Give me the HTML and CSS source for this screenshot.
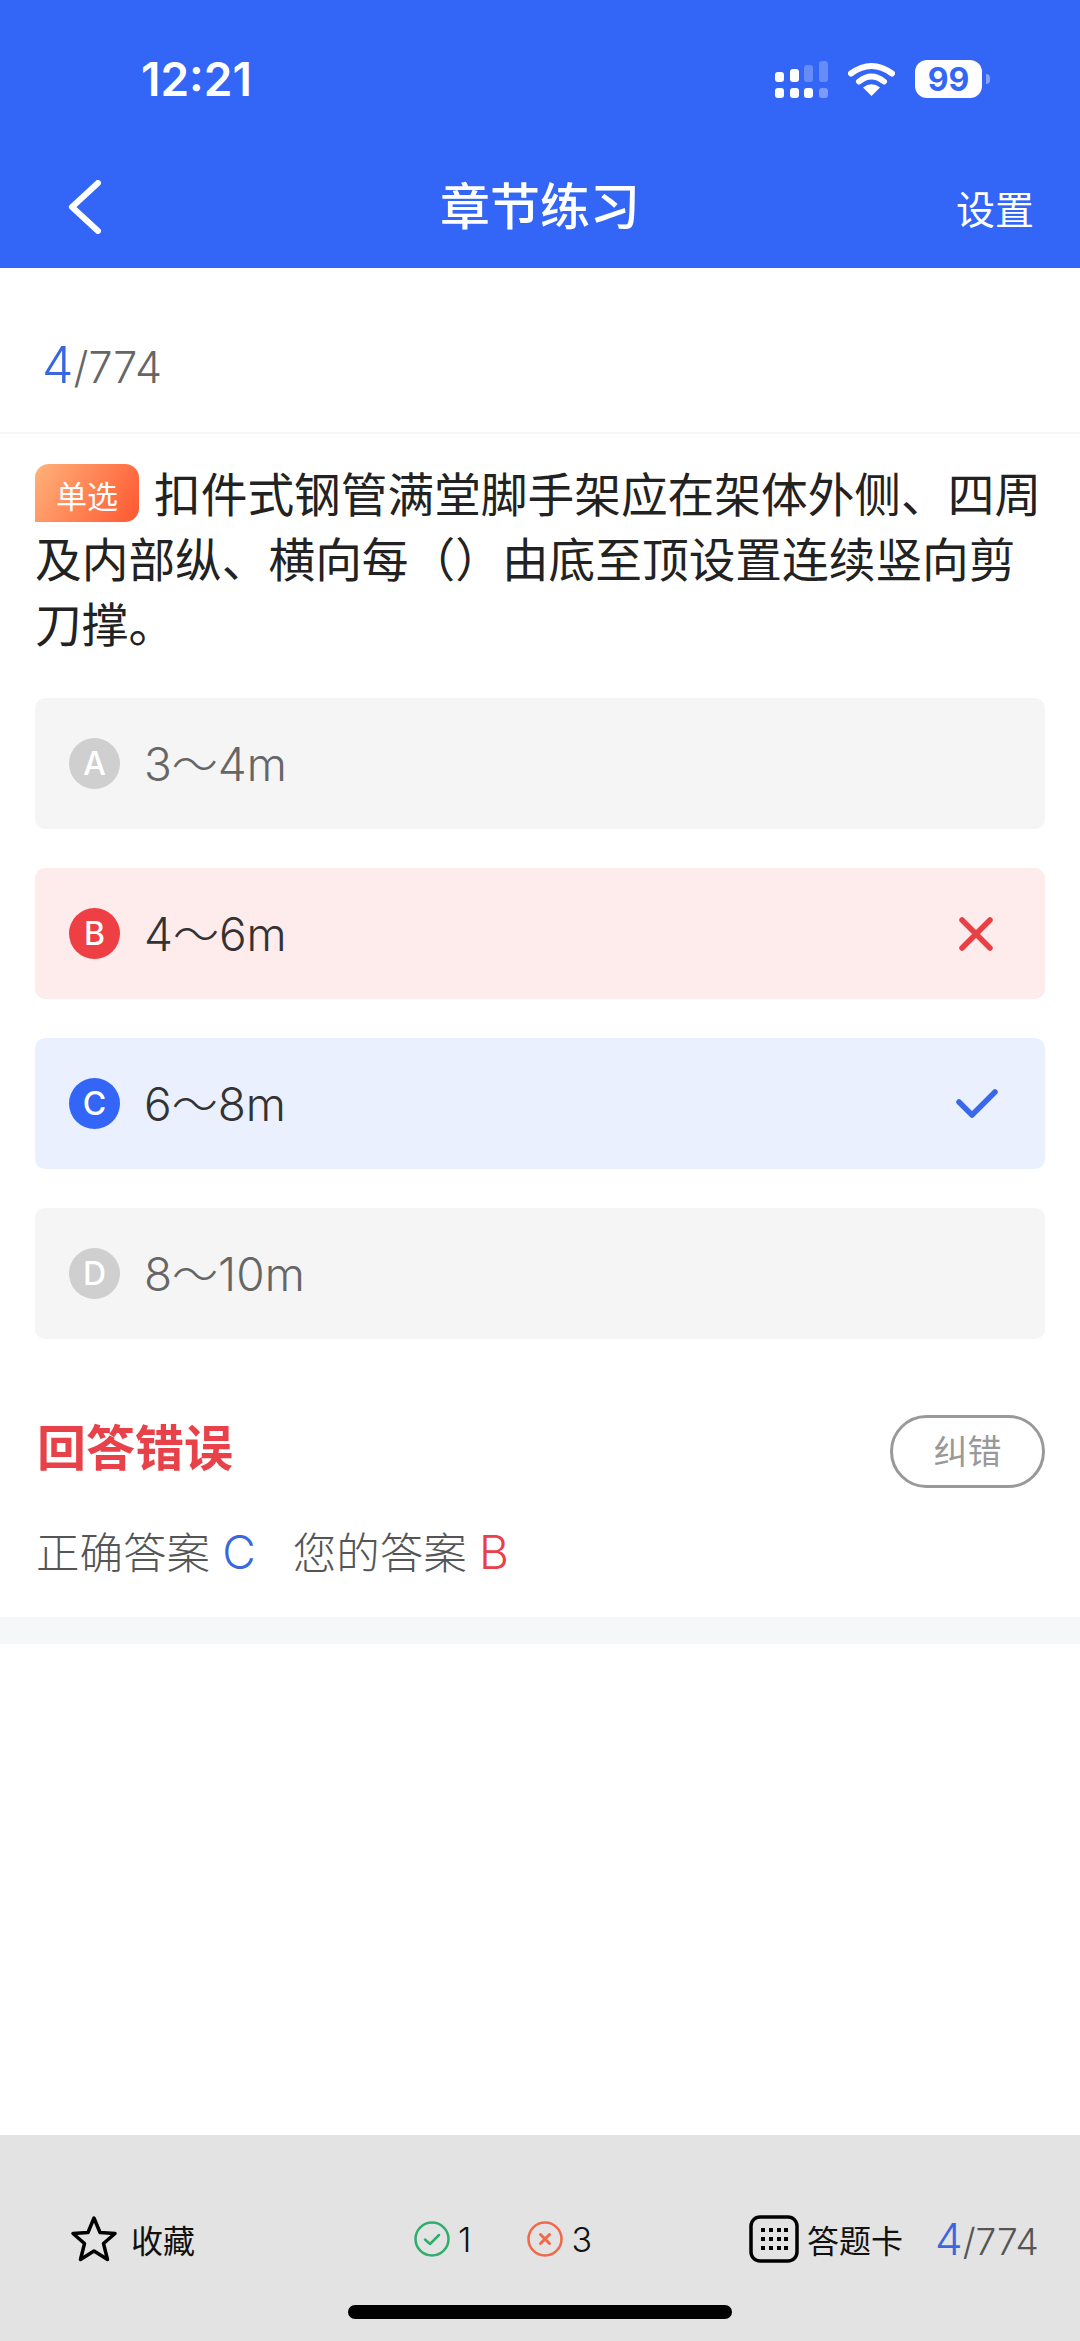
FILE: index.html
```html
<!DOCTYPE html>
<html lang="zh-CN">
<head>
    <meta charset="UTF-8">
    <meta name="viewport" content="width=device-width, initial-scale=1.0">
    <title>章节练习</title>
    <link rel="stylesheet" href="styles.css">
</head>
<body>
    <header class="header">
        <div class="status-bar">
            <span class="time">12:21</span>
            <div class="status-icons">
                <svg class="signal" width="53" height="37" viewBox="0 0 53 37">
                    <rect x="0" y="11" width="9" height="10" rx="3" fill="#fff"/>
                    <rect x="15" y="8" width="9" height="13" rx="3" fill="#fff"/>
                    <rect x="29" y="4" width="9" height="17" rx="3" fill="#fff" opacity="0.25"/>
                    <rect x="44" y="0" width="9" height="21" rx="3" fill="#fff" opacity="0.25"/>
                    <rect x="0" y="27" width="9" height="10" rx="3" fill="#fff"/>
                    <rect x="15" y="27" width="9" height="10" rx="3" fill="#fff"/>
                    <rect x="29" y="27" width="9" height="10" rx="3" fill="#fff"/>
                    <rect x="44" y="27" width="9" height="10" rx="3" fill="#fff" opacity="0.35"/>
                </svg>
                <svg class="wifi" width="47" height="34" viewBox="0 0 47 34">
                    <path d="M3 11.5Q23.5 -3.5 44 11.5" fill="none" stroke="#fff" stroke-width="6" stroke-linecap="round"/>
                    <path d="M11 19.5Q23.5 9.5 36 19.5" fill="none" stroke="#fff" stroke-width="6" stroke-linecap="round"/>
                    <path d="M23.5 34L15 25.5Q23.5 19 32 25.5Z" fill="#fff"/>
                </svg>
                <div class="battery"><span class="battery-level">99</span></div>
                <span class="battery-nub"></span>
            </div>
        </div>
        <nav class="nav">
            <svg class="back" width="34" height="54" viewBox="0 0 34 54">
                <path d="M30 3L4 27L30 51" fill="none" stroke="#fff" stroke-width="6" stroke-linecap="round" stroke-linejoin="round"/>
            </svg>
            <h1 class="nav-title">章节练习</h1>
            <span class="nav-action">设置</span>
        </nav>
    </header>

    <main class="content">
        <div class="counter"><span class="counter-current">4</span><span class="counter-total">/774</span></div>

        <p class="question"><span class="tag">单选</span>扣件式钢管满堂脚手架应在架体外侧、四周及内部纵、横向每（）由底至顶设置连续竖向剪刀撑。</p>

        <div class="options">
            <div class="option">
                <span class="option-letter">A</span>
                <span class="option-text">3～4m</span>
            </div>
            <div class="option option-wrong">
                <span class="option-letter">B</span>
                <span class="option-text">4～6m</span>
                <svg class="option-mark option-mark-cross" width="34" height="34" viewBox="0 0 34 34">
                    <path d="M3 3L31 31M31 3L3 31" fill="none" stroke="#ea4045" stroke-width="5.5" stroke-linecap="round"/>
                </svg>
            </div>
            <div class="option option-right">
                <span class="option-letter">C</span>
                <span class="option-text">6～8m</span>
                <svg class="option-mark" width="42" height="30" viewBox="0 0 42 30">
                    <path d="M3 13L16 26L39 3" fill="none" stroke="#3a68ea" stroke-width="5.5" stroke-linecap="round" stroke-linejoin="round"/>
                </svg>
            </div>
            <div class="option">
                <span class="option-letter">D</span>
                <span class="option-text">8～10m</span>
            </div>
        </div>

        <div class="result">
            <span class="result-title">回答错误</span>
            <span class="report-btn">纠错</span>
        </div>
        <div class="answers">
            <span>正确答案 <em class="answer-right">C</em></span>
            <span>您的答案 <em class="answer-wrong">B</em></span>
        </div>
        <div class="band"></div>
    </main>

    <footer class="toolbar">
        <div class="toolbar-row">
            <div class="tool">
                <svg width="48" height="48" viewBox="0 0 48 48">
                    <path d="M24 3L30 17.5L45 18.5L33.5 28.5L37.5 44.5L24 36L10.5 44.5L14.5 28.5L3 18.5L18 17.5Z" fill="none" stroke="#000" stroke-width="3.5" stroke-linejoin="round"/>
                </svg>
                <span class="tool-label">收藏</span>
            </div>
            <div class="tool">
                <svg width="36" height="36" viewBox="0 0 36 36">
                    <circle cx="18" cy="18" r="16.5" fill="none" stroke="#2fae6b" stroke-width="2.5"/>
                    <path d="M11 18.5L16 23L25 14" fill="none" stroke="#2fae6b" stroke-width="2.5" stroke-linecap="round" stroke-linejoin="round"/>
                </svg>
                <span class="tool-count">1</span>
                <svg class="tool-gap" width="36" height="36" viewBox="0 0 36 36">
                    <circle cx="18" cy="18" r="16.5" fill="none" stroke="#f0694a" stroke-width="2.5"/>
                    <path d="M13.5 13.5L22.5 22.5M22.5 13.5L13.5 22.5" fill="none" stroke="#f0694a" stroke-width="3" stroke-linecap="round"/>
                </svg>
                <span class="tool-count">3</span>
            </div>
            <div class="tool">
                <svg width="50" height="48" viewBox="0 0 50 48">
                    <rect x="2" y="2" width="46" height="44" rx="9" fill="none" stroke="#000" stroke-width="3.5"/>
                    <g fill="#000">
                        <rect x="12" y="13" width="4" height="4"/><rect x="20" y="13" width="4" height="4"/><rect x="28" y="13" width="4" height="4"/><rect x="35" y="13" width="4" height="4"/>
                        <rect x="12" y="22" width="4" height="4"/><rect x="20" y="22" width="4" height="4"/><rect x="28" y="22" width="4" height="4"/><rect x="35" y="22" width="4" height="4"/>
                        <rect x="12" y="31" width="4" height="4"/><rect x="20" y="31" width="4" height="4"/><rect x="28" y="31" width="4" height="4"/><rect x="35" y="31" width="4" height="4"/>
                    </g>
                </svg>
                <span class="tool-label tool-label-near">答题卡</span>
                <span class="toolbar-counter"><span class="toolbar-current">4</span><span class="toolbar-total">/774</span></span>
            </div>
        </div>
        <div class="home-indicator"></div>
    </footer>
</body>
</html>
```

FILE: styles.css
```css
* { box-sizing: border-box; }
body {
    margin: 0;
    width: 1080px;
    height: 2341px;
    display: flex;
    flex-direction: column;
    background-color: #fff;
    font-family: "Inter", "Noto Sans CJK SC", sans-serif;
    overflow: hidden;
}

/* header */
.header { height: 268px; background-color: #3366f6; color: #fff; flex-shrink: 0; }
.status-bar { height: 158px; padding: 0 90px 0 141px; display: flex; align-items: center; justify-content: space-between; }
.time { font-size: 46px; font-weight: 600; }
.status-icons { display: flex; align-items: center; }
.wifi { margin-left: 20px; }
.battery { width: 67px; height: 38px; margin-left: 20px; background-color: #fff; border-radius: 12px; display: flex; align-items: center; justify-content: center; }
.battery-level { font-size: 32px; font-weight: 700; color: #3366f6; }
.battery-nub { width: 4px; height: 10px; margin-left: 4px; background-color: rgba(255,255,255,0.4); border-radius: 0 4px 4px 0; }
.nav { height: 98px; padding: 0 46px 0 68px; display: flex; align-items: center; justify-content: space-between; position: relative; }
.nav-title { margin: 0; position: absolute; left: 0; right: 0; text-align: center; font-size: 50px; font-weight: 500; line-height: 98px; }
.nav-action { font-size: 39px; }

/* question */
.content { flex: 1; }
.counter { height: 166px; padding: 72px 0 0 42px; border-bottom: 2px solid #f6f6f6; display: flex; align-items: baseline; line-height: 50px; }
.counter-current { font-size: 50px; font-weight: 300; color: #3a66e0; }
.counter-total { font-size: 43px; font-weight: 300; color: #666; }
.question { margin: 0; padding: 29px 35px 0; font-size: 46.7px; line-height: 65px; color: #222; }
.tag {
    display: inline-block;
    width: 104px;
    height: 58px;
    margin: -6px 15px 0 0;
    vertical-align: 4px;
    border-radius: 14px 14px 14px 0;
    background: linear-gradient(120deg, #ffb27a, #ff5630);
    color: #fff;
    font-size: 31px;
    line-height: 65px;
    text-align: center;
}

/* options */
.options { margin-top: 40px; padding: 0 35px; display: flex; flex-direction: column; gap: 39px; }
.option { height: 131px; padding: 0 47px 0 34px; display: flex; align-items: center; border-radius: 10px; background-color: #f5f5f5; color: #666; font-size: 46px; font-weight: 300; }
.option-letter { width: 51px; height: 51px; margin-right: 24px; border-radius: 50%; background-color: #cfcfcf; color: #fff; font-size: 32px; font-weight: 500; line-height: 52px; text-align: center; }
.option-text { padding-bottom: 6px; }
.option-mark { margin-left: auto; }
.option-mark-cross { margin-right: 5px; }
.option-wrong { background-color: #fdeceb; color: #333; }
.option-wrong .option-letter { background-color: #ee3f44; }
.option-right { background-color: #eaf0fd; color: #333; }
.option-right .option-letter { background-color: #3366f6; }

/* result */
.result { margin-top: 76px; padding: 0 35px 0 37px; display: flex; align-items: center; justify-content: space-between; }
.result-title { padding-bottom: 6px; font-size: 49px; font-weight: 700; line-height: 1; color: #e8414a; }
.report-btn { width: 155px; height: 73px; border: 3px solid #999; border-radius: 37px; color: #999; font-size: 34px; line-height: 67px; text-align: center; }
.answers { margin-top: 35px; padding-left: 36px; display: flex; gap: 37px; font-size: 43.5px; font-weight: 300; line-height: 60px; color: #555; }
.answers span { height: 60px; }
.answers em { font-size: 46px; font-style: normal; line-height: 1; }
.answer-right { color: #3a66e0; }
.answer-wrong { color: #e8414a; }
.band { height: 27px; margin-top: 34px; background-color: #f4f8f9; }

/* bottom bar */
.toolbar { height: 206px; flex-shrink: 0; padding-top: 77px; background-color: #e3e3e3; }
.toolbar-row { height: 47px; padding-left: 70px; display: grid; grid-template-columns: 344px 335px 1fr; align-items: center; }
.tool { display: flex; align-items: center; color: #111; }
.tool-label { margin-left: 13px; font-size: 32px; }
.tool-label-near { margin-left: 8px; }
.tool-count { margin-left: 8px; font-size: 34px; font-weight: 300; }
.tool-gap { margin-left: 56px; }
.toolbar-counter { margin-left: 32px; display: flex; align-items: baseline; font-weight: 300; }
.toolbar-current { font-size: 44px; color: #3a66e0; }
.toolbar-total { font-size: 37px; color: #555; }
.home-indicator { width: 384px; height: 14px; margin: 46px auto 0; border-radius: 7px; background-color: #000; }
```
